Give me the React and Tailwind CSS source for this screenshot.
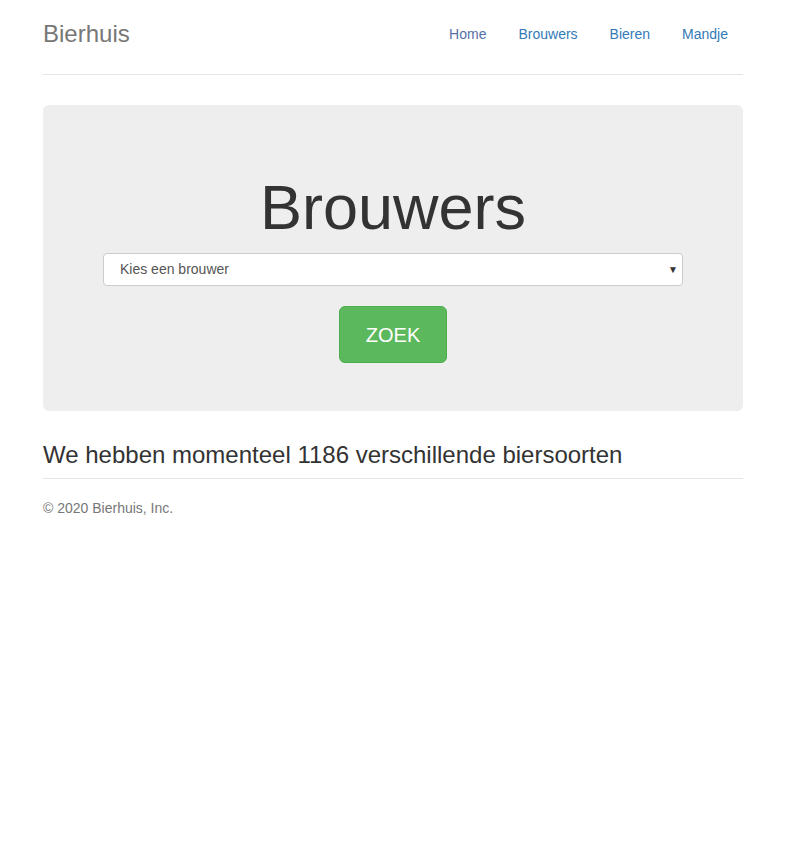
export default function App() {
  const font = { fontFamily: '"Liberation Sans", Arial, sans-serif' };
  return (
    <div className="min-h-[865px] bg-white pt-[14px] text-[14px] text-[#333]" style={font}>
      <div className="ml-[43px] w-[700px]">
        <div className="flex items-center justify-between border-b border-[#e5e5e5] pb-[20px]">
          <h3 className="m-0 text-[24px] leading-[40px] text-[#777]">Bierhuis</h3>
          <nav className="flex">
            <a className="px-[16px] leading-[40px] text-[#5670a8]">Home</a>
            <a className="px-[16px] leading-[40px] text-[#337ab7]">Brouwers</a>
            <a className="px-[16px] leading-[40px] text-[#337ab7]">Bieren</a>
            <a className="pl-[16px] pr-[15px] leading-[40px] text-[#337ab7]">Mandje</a>
          </nav>
        </div>

        <div className="mt-[30px] flex flex-col items-center rounded-[6px] bg-[#eeeeee] px-[60px] pb-[48px] pt-[68px]">
          <h1 className="m-0 text-[63px] leading-[69px] text-[#333]">Brouwers</h1>
          <div className="relative mt-[11px] h-[33px] w-[580px] rounded-[4px] border border-[#ccc] bg-white">
            <span className="absolute left-[16px] top-0 text-[14px] leading-[31px] text-[#555]">Kies een brouwer</span>
            <span className="absolute right-[4px] top-0 text-[10px] leading-[31px] text-[#333]">▼</span>
          </div>
          <button className="mt-[20px] h-[57px] w-[108px] rounded-[6px] border border-[#4cae4c] bg-[#5cb85c] text-[20px] text-white">
            ZOEK
          </button>
        </div>

        <h2 className="m-0 mt-[29px] text-[24px] leading-[30px] text-[#333]">
          We hebben momenteel 1186 verschillende biersoorten
        </h2>
        <div className="mt-[8px] border-t border-[#e5e5e5] pt-[19px]">
          <p className="m-0 text-[14px] leading-[20px] text-[#777]">© 2020 Bierhuis, Inc.</p>
        </div>
      </div>
    </div>
  );
}
